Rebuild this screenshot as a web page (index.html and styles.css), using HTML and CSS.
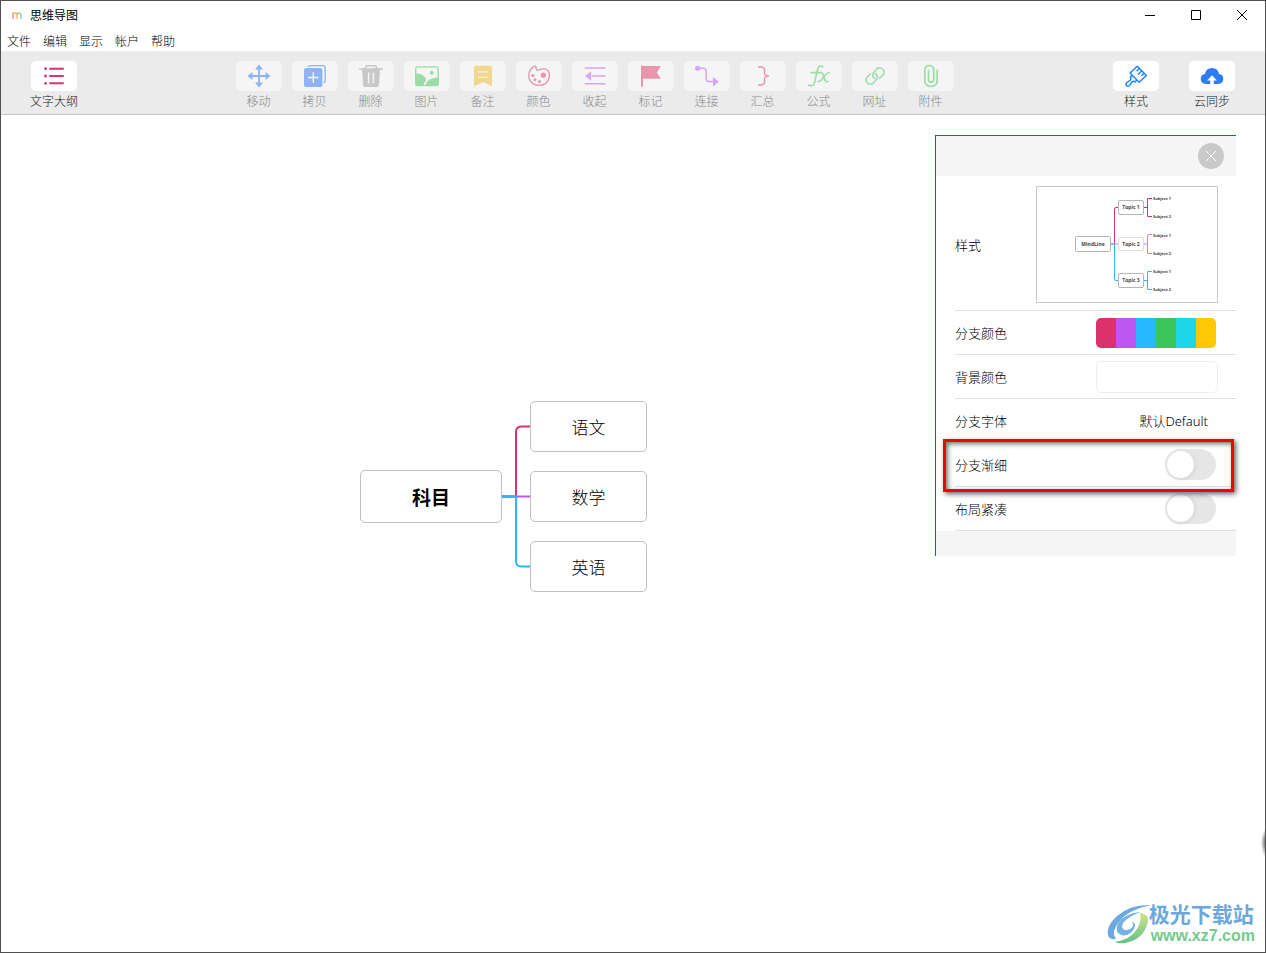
FILE: index.html
```html
<!DOCTYPE html>
<html lang="zh-CN">
<head>
<meta charset="utf-8">
<meta name="viewport" content="width=device-width, initial-scale=1">
<title>思维导图</title>
<link rel="stylesheet" href="styles.css">
</head>
<body>
<div class="window">
  <header class="titlebar">
    <svg class="app-icon" viewBox="0 0 10 10" aria-hidden="true" fill="none" stroke-width="1.3">
      <path d="M1 8V1.5" stroke="#e8837a"/>
      <path d="M1 3.5Q1 2 3 2Q5 2 5 4V8" stroke="#f0b95a"/>
      <path d="M5 4Q5 2 7 2Q9 2 9 4" stroke="#9bd08a"/>
      <path d="M9 4V8" stroke="#6cc5ee"/>
    </svg>
    <h1 class="title">思维导图</h1>
    <div class="window-controls">
      <button class="window-button" type="button" aria-label="最小化"><svg viewBox="0 0 12 12"><path d="M1 5.5H11"/></svg></button>
      <button class="window-button" type="button" aria-label="最大化"><svg viewBox="0 0 12 12"><path d="M1.5 0.5H10.5V9.5H1.5Z"/></svg></button>
      <button class="window-button" type="button" aria-label="关闭"><svg viewBox="0 0 12 12"><path d="M1 0L11 10M11 0L1 10"/></svg></button>
    </div>
  </header>

  <nav class="menubar" aria-label="菜单">
    <button class="menu" type="button">文件</button>
    <button class="menu" type="button">编辑</button>
    <button class="menu" type="button">显示</button>
    <button class="menu" type="button">帐户</button>
    <button class="menu" type="button">帮助</button>
  </nav>

  <div class="toolbar" role="toolbar">
    <div class="tool-group">
      <button class="tool outline" type="button">
        <span class="tile"><svg class="icon" viewBox="0 0 26 26" fill="none" stroke="currentColor" stroke-width="2" stroke-linecap="round"><path d="M9 5.7H22M9 13H22M9 20.3H22"/><path d="M4.6 5.7h.01M4.6 13h.01M4.6 20.3h.01" stroke-width="2.8"/></svg></span>
        <span class="tool-label">文字大纲</span>
      </button>
    </div>

    <div class="tool-group main-tools">
      <button class="tool blue" type="button" disabled>
        <span class="tile"><svg class="icon" viewBox="0 0 26 26" fill="currentColor"><path d="M13 4V22M4 13H22" stroke="currentColor" stroke-width="1.8"/><path d="M13 1.6L17 6.4H9ZM13 24.4L17 19.6H9ZM1.6 13L6.4 9V17ZM24.4 13L19.6 9V17Z"/></svg></span>
        <span class="tool-label">移动</span>
      </button>
      <button class="tool blue" type="button" disabled>
        <span class="tile"><svg class="icon" viewBox="0 0 26 26"><path d="M6 4.2Q6.4 2.7 8.5 2.7H20.5Q23.2 2.7 23.2 5.4V17.5Q23.2 19.4 21.6 20.2" fill="none" stroke="currentColor" stroke-width="1.3"/><rect x="2" y="5" width="18.4" height="19" rx="2.6" fill="currentColor"/><path d="M11.3 9.2V19.8M6 14.5H16.6" stroke="#f5f5f5" stroke-width="1.4"/></svg></span>
        <span class="tool-label">拷贝</span>
      </button>
      <button class="tool gray" type="button" disabled>
        <span class="tile"><svg class="icon" viewBox="0 0 26 26"><path d="M1.2 6H24.8M7 5.6L8.3 2.8H17.7L19 5.6" fill="none" stroke="currentColor" stroke-width="1.6" stroke-linejoin="round"/><path d="M4 6H22L21 21.8Q20.8 24 18.6 24H7.4Q5.2 24 5 21.8Z" fill="currentColor"/><path d="M10.6 9.5V20.5M15.4 9.5V20.5" stroke="#f5f5f5" stroke-width="1.5"/></svg></span>
        <span class="tool-label">删除</span>
      </button>
      <button class="tool green" type="button" disabled>
        <span class="tile"><svg class="icon" viewBox="0 0 26 26"><rect x="1.7" y="3.9" width="22.6" height="18.6" rx="2" fill="none" stroke="currentColor" stroke-width="1.4"/><path d="M2 10.5Q10.5 10.3 12.3 17.2Q9.8 19.3 9.6 22.5H3Q2 22.5 2 21.5ZM11.4 22.5Q12.2 15.2 24.3 14.2V21.5Q24.3 22.5 23.3 22.5Z" fill="currentColor"/><circle cx="17.7" cy="9.7" r="2" fill="currentColor"/></svg></span>
        <span class="tool-label">图片</span>
      </button>
      <button class="tool yellow" type="button" disabled>
        <span class="tile"><svg class="icon" viewBox="0 0 26 26"><path d="M4 23.3V4.7Q4 2.7 6 2.7H20Q22 2.7 22 4.7V23.3L13 19.2Z" fill="currentColor"/><path d="M8.2 8.8H17.8M8.2 14.3H17.8" stroke="#f8f2df" stroke-width="1.3" stroke-linecap="round"/></svg></span>
        <span class="tool-label">备注</span>
      </button>
      <button class="tool pink" type="button" disabled>
        <span class="tile"><svg class="icon" viewBox="0 0 26 26"><path d="M6.8 4.4Q10 1.8 10.2 5.2Q9.8 8 13 6.8Q18 4.8 21.3 7Q24.2 9.4 23.2 14.3Q21.5 21.8 13.5 22.4Q5.8 22.5 3.3 16Q1.2 8.8 6.8 4.4Z" fill="none" stroke="currentColor" stroke-width="1.4"/><g fill="currentColor"><circle cx="17.3" cy="12.2" r="2.6"/><circle cx="6.8" cy="12.4" r="1.5"/><circle cx="9" cy="16.8" r="1.5"/><circle cx="13.5" cy="18.5" r="1.5"/></g></svg></span>
        <span class="tool-label">颜色</span>
      </button>
      <button class="tool purple" type="button" disabled>
        <span class="tile"><svg class="icon" viewBox="0 0 26 26"><path d="M3.4 5H22.8M10.8 13H22.8M3.4 20.7H22.8" stroke="currentColor" stroke-width="1.5" stroke-linecap="round"/><path d="M3 13L9.2 8.2V17.8Z" fill="currentColor"/></svg></span>
        <span class="tool-label">收起</span>
      </button>
      <button class="tool pink" type="button" disabled>
        <span class="tile"><svg class="icon" viewBox="0 0 26 26"><path d="M4 3.2V23" stroke="currentColor" stroke-width="2" stroke-linecap="round"/><path d="M4 3H22.8L18.9 9.4L22.8 15.8H4Z" fill="currentColor"/></svg></span>
        <span class="tool-label">标记</span>
      </button>
      <button class="tool purple" type="button" disabled>
        <span class="tile"><svg class="icon" viewBox="0 0 26 26"><path d="M4 5.3H9.2Q12.2 5.3 12.2 8.3V15.4Q12.2 18.6 15.2 18.6H19.5" fill="none" stroke="currentColor" stroke-width="1.5"/><circle cx="3.7" cy="5.3" r="2.6" fill="currentColor"/><path d="M19 14L24.8 18.8L19 23.6Z" fill="currentColor"/></svg></span>
        <span class="tool-label">连接</span>
      </button>
      <button class="tool pink" type="button" disabled>
        <span class="tile"><svg class="icon" viewBox="0 0 26 26"><path d="M8 4.1H11.3Q14.5 4.1 14.5 7V10Q14.5 12.7 18.8 12.9Q14.5 13.1 14.5 15.8V19Q14.5 21.9 11.3 21.9H8" fill="none" stroke="currentColor" stroke-width="1.5"/></svg></span>
        <span class="tool-label">汇总</span>
      </button>
      <button class="tool green" type="button" disabled>
        <span class="tile"><svg class="icon" viewBox="0 0 26 26"><path d="M17 3.8Q12.8 1.2 11.5 6.8L8.6 19.2Q7.4 24 2.8 22.2M5 9.6H15.4M14.2 9.8Q16.2 9.2 17 11.4L19 17.2Q19.8 19.6 22.2 18.4M23.4 9.8Q21.2 9.6 19.2 12L15.8 16.4Q14 18.8 12 18.4" fill="none" stroke="currentColor" stroke-width="1.6" stroke-linecap="round"/></svg></span>
        <span class="tool-label">公式</span>
      </button>
      <button class="tool green" type="button" disabled>
        <span class="tile"><svg class="icon" viewBox="0 0 26 26"><path d="M12.6 15.6A4.6 4.6 0 0 1 11.6 9.6L15.4 5.2A4.6 4.6 0 0 1 21.6 11.2L17.4 15.2M13.4 10.4A4.6 4.6 0 0 1 14.4 16.4L10.6 20.8A4.6 4.6 0 0 1 4.4 14.8L8.6 10.8" fill="none" stroke="currentColor" stroke-width="1.5" stroke-linecap="round"/></svg></span>
        <span class="tool-label">网址</span>
      </button>
      <button class="tool green" type="button" disabled>
        <span class="tile"><svg class="icon" viewBox="0 0 26 26"><path d="M19.2 7V17.2Q19.2 23.3 13 23.3Q6.8 23.3 6.8 17.2V7.2Q6.8 2.5 11.2 2.5Q15.7 2.5 15.7 7.2V16.5Q15.7 19.2 13.1 19.2Q10.5 19.2 10.5 16.5V7.5" fill="none" stroke="currentColor" stroke-width="1.7" stroke-linecap="round"/></svg></span>
        <span class="tool-label">附件</span>
      </button>
    </div>

    <div class="tool-group side-tools">
      <button class="tool style" type="button">
        <span class="tile"><svg class="icon" viewBox="0 0 26 26"><path d="M14.3 3.2L23.4 12.4L16.2 19.3L7 10.1ZM9.2 12.3L7.4 14.2Q8.6 16.4 6.8 17.6L3.7 19.8Q2.2 21.6 3.6 22.8Q5 24.2 6.6 22.4L9 19Q10.2 17.6 12 19L13.9 17M16.4 5.4L14 7.8M18.8 7.8L15.3 11.2M21.2 10.2L18.8 12.6" fill="none" stroke="currentColor" stroke-width="1.4" stroke-linejoin="round" stroke-linecap="round"/></svg></span>
        <span class="tool-label">样式</span>
      </button>
      <button class="tool cloud" type="button">
        <span class="tile"><svg class="icon" viewBox="0 0 26 26"><path d="M7 21Q1.7 20.6 1.7 15.8Q1.8 11.8 5.9 11Q7 5 13 5Q18.9 5 20.1 11Q24.3 11.8 24.3 15.8Q24.3 20.6 19 21Z" fill="currentColor"/><path d="M13 12.2L17.8 17.4H14.8V21H11.2V17.4H8.2Z" fill="#fff"/></svg></span>
        <span class="tool-label">云同步</span>
      </button>
    </div>
  </div>

  <main class="canvas">
    <section class="mindmap" aria-label="科目">
      <div class="node root">科目</div>
      <svg class="links" viewBox="0 0 28 191" fill="none" stroke-width="2" aria-hidden="true">
        <path d="M0 95.5H14V31Q14 25.5 19.5 25.5H28" stroke="#dc316b"/>
        <path d="M0 95.5H28" stroke="#be57f2"/>
        <path d="M0 95.5H14V160Q14 165.5 19.5 165.5H28" stroke="#26b9ff"/>
      </svg>
      <div class="branches">
        <div class="node">语文</div>
        <div class="node">数学</div>
        <div class="node">英语</div>
      </div>
    </section>

    <aside class="panel" aria-label="样式">
      <div class="panel-header">
        <button class="panel-close" type="button" aria-label="关闭"><svg viewBox="0 0 12 12"><path d="M1 1L11 11M11 1L1 11"/></svg></button>
      </div>
      <div class="row preview-row">
        <span>样式</span>
        <button class="preview" type="button" aria-label="样式预览">
          <svg viewBox="0 0 180 115" fill="none">
            <g stroke="#dc316b"><path d="M77.5 57V22Q77.5 20.5 79 20.5H81M106 20.5H110.5M115 11.5H110.5V29.5H115"/></g>
            <g stroke="#c77df5"><path d="M74 57H81M106 57H110.5M115 47.5H112Q110.5 47.5 110.5 49V66.5H115"/></g>
            <g stroke="#26b9ff"><path d="M74 57H77.5V92Q77.5 93.5 79 93.5H81M106 93.5H110.5M115 84.5H110.5V102.5H115"/></g>
            <g stroke="#b5b5b5"><rect x="38.5" y="49.5" width="35" height="15" rx="1.5"/><rect x="81.5" y="13.5" width="25" height="14" rx="1.5"/><rect x="81.5" y="50.5" width="25" height="13" rx="1.5" stroke="#dddddd"/><rect x="81.5" y="86.5" width="25" height="14" rx="1.5"/></g>
            <g class="mini-topic"><text x="56" y="59">MindLine</text><text x="94" y="22">Topic 1</text><text x="94" y="59">Topic 2</text><text x="94" y="95">Topic 3</text></g>
            <g class="mini-subject"><text x="116" y="13">Subject 1</text><text x="116" y="31">Subject 2</text><text x="116" y="50">Subject 1</text><text x="116" y="68">Subject 2</text><text x="116" y="86">Subject 1</text><text x="116" y="104">Subject 2</text></g>
          </svg>
        </button>
      </div>
      <div class="row">
        <span>分支颜色</span>
        <div class="field"><button class="palette" type="button" aria-label="分支颜色"><i class="c1"></i><i class="c2"></i><i class="c3"></i><i class="c4"></i><i class="c5"></i><i class="c6"></i></button></div>
      </div>
      <div class="row">
        <span>背景颜色</span>
        <div class="field"><button class="background-color" type="button" aria-label="背景颜色"></button></div>
      </div>
      <div class="row">
        <span>分支字体</span>
        <button class="font-value" type="button">默认Default</button>
      </div>
      <div class="row highlighted">
        <label for="taper">分支渐细</label>
        <input class="switch" id="taper" type="checkbox" role="switch">
      </div>
      <div class="row">
        <label for="compact">布局紧凑</label>
        <input class="switch" id="compact" type="checkbox" role="switch">
      </div>
      <div class="panel-footer"></div>
    </aside>

    <div class="edge-shadow"></div>

    <div class="watermark">
      <svg class="watermark-logo" viewBox="0 0 46 40" aria-hidden="true">
        <defs>
          <linearGradient id="leaf" x1="0" y1="0" x2="0" y2="1"><stop offset="0" stop-color="#d3e386"/><stop offset="1" stop-color="#5fc283"/></linearGradient>
        </defs>
        <path d="M44 1Q24 0 10 12Q-1 22 1 31Q2 36 9 35Q4 29 11 19Q20 6 44 1Z" fill="#6ca9df"/>
        <path d="M34 8Q18 9 11 19Q7 28 14 31Q22 33 27 25Q30 19 25 18Q28 22 23 25Q17 28 15 23Q15 15 34 8Z" fill="#76b2e2"/>
        <path d="M33 9Q44 10 40 21Q35 36 18 39Q12 40 8 38Q23 36 30 25Q35 17 33 9Z" fill="url(#leaf)"/>
      </svg>
      <div class="watermark-text"><span class="watermark-name">极光下载站</span><span class="watermark-url">www.xz7.com</span></div>
    </div>
  </main>
</div>
</body>
</html>
```
FILE: styles.css
```css
* {
  box-sizing: border-box;
}

body {
  margin: 0;
  font-family: "Noto Sans", "Noto Sans CJK SC", sans-serif;
  font-size: 12px;
  font-weight: 300;
  color: #000;
}

button {
  padding: 0;
  border: 0;
  background: none;
  color: inherit;
  font: inherit;
}

svg {
  display: block;
}

.window {
  display: flex;
  flex-direction: column;
  min-height: 100vh;
  border: 1px solid #505050;
  background: #fff;
}

/* Title bar and menus */
.titlebar {
  display: flex;
  align-items: center;
  height: 30px;
  padding-left: 11px;
}

.app-icon {
  width: 10px;
  height: 10px;
}

.title {
  margin: 0 auto 0 8px;
  font-size: 12px;
  font-weight: 400;
  line-height: 20px;
}

.window-controls {
  display: flex;
}

.window-button {
  display: grid;
  place-items: center;
  width: 46px;
  height: 30px;
}

.window-button svg {
  width: 12px;
  height: 12px;
  fill: none;
  stroke: #000;
}

.menubar {
  display: flex;
  gap: 12px;
  height: 20px;
  padding-left: 6px;
}

.menu {
  line-height: 22px;
}

/* Toolbar */
.toolbar {
  display: flex;
  justify-content: space-between;
  height: 64px;
  padding: 10px 30px 0 29px;
  border-bottom: 1px solid #c6c6c6;
  background: #ebebeb;
}

.tool-group {
  display: flex;
}

.main-tools {
  gap: 10px;
  padding-right: 2px;
}

.side-tools {
  gap: 30px;
}

.tool {
  display: flex;
  flex-direction: column;
  align-items: center;
  min-width: 46px;
}

.tile {
  display: grid;
  place-items: center;
  width: 46px;
  height: 30px;
  border-radius: 5px;
  background: #fff;
}

.tool:disabled .tile {
  background: #f5f5f5;
}

.icon {
  width: 26px;
  height: 26px;
}

.tool-label {
  line-height: 22px;
  color: #222;
}

.tool:disabled .tool-label {
  color: #888;
}

.outline { color: #e0316d; }
.blue { color: #8fb4f5; }
.gray { color: #c8c8c8; }
.green { color: #9cdca6; }
.yellow { color: #f2d88f; }
.pink { color: #e896ae; }
.purple { color: #d7a5f4; }
.style { color: #1684fc; }
.cloud { color: #2f7bf6; }

/* Mind map */
.canvas {
  position: relative;
  flex: 1;
  min-height: 480px;
  overflow: hidden;
}

.mindmap {
  position: absolute;
  top: 286px;
  left: 359px;
  display: flex;
  align-items: center;
}

.node {
  display: grid;
  place-items: center;
  width: 117px;
  height: 51px;
  border: 1px solid #c0c0c0;
  border-radius: 5px;
  background: #fff;
  font-size: 17px;
}

.root {
  width: 142px;
  height: 53px;
  font-size: 19px;
  font-weight: 700;
}

.links {
  width: 28px;
  height: 191px;
}

.branches {
  display: grid;
  gap: 19px;
}

/* Style panel */
.panel {
  position: absolute;
  top: 20px;
  right: 29px;
  width: 301px;
  border-top: 1px solid #0f62b8;
  border-left: 1px solid #0f62b8;
  background: #fff;
  font-size: 13px;
}

.panel-header {
  display: flex;
  align-items: center;
  justify-content: flex-end;
  height: 40px;
  padding-right: 12px;
  background: #f5f5f5;
}

.panel-close {
  display: grid;
  place-items: center;
  width: 26px;
  height: 26px;
  border-radius: 50%;
  background: #c9c9c9;
}

.panel-close svg {
  width: 12px;
  height: 12px;
  stroke: #fff;
}

.row {
  position: relative;
  display: flex;
  align-items: center;
  justify-content: space-between;
  height: 44px;
  margin-left: 19px;
  padding-right: 18px;
  border-bottom: 1px solid #e0e0e0;
}

.preview-row {
  height: 135px;
  padding-top: 2px;
}

.preview {
  width: 182px;
  border: 1px solid #c8c8c8;
  background: #fff;
}

.mini-topic,
.mini-subject {
  fill: #444;
  font-family: "Open Sans", sans-serif;
  font-weight: 700;
}

.mini-topic {
  font-size: 5px;
  text-anchor: middle;
}

.mini-subject {
  font-size: 4px;
}

.field {
  width: 122px;
}

.palette {
  display: flex;
  width: 120px;
  height: 30px;
  border-radius: 5px;
  overflow: hidden;
}

.palette i {
  flex: 1;
  height: 30px;
}

.c1 { background: #dc316b; }
.c2 { background: #be57f2; }
.c3 { background: #26b9ff; }
.c4 { background: #3ac55d; }
.c5 { background: #1cd7e8; }
.c6 { background: #ffc800; }

.background-color {
  display: block;
  width: 122px;
  height: 32px;
  border: 1px solid #eee;
  border-radius: 5px;
  background: #fff;
}

.font-value {
  margin-right: 10px;
}

.switch {
  appearance: none;
  width: 51px;
  height: 31px;
  margin: 0 2px 0 0;
  padding: 2px;
  border-radius: 16px;
  background: #e6e6e6;
}

.switch::before {
  content: "";
  display: block;
  width: 27px;
  height: 27px;
  border-radius: 50%;
  background: #fff;
  box-shadow: 1px 1px 4px #d2d2d2;
}

.switch:checked {
  background: #3ac55d;
}

.switch:checked::before {
  margin-left: 20px;
}

.highlighted::after {
  content: "";
  position: absolute;
  z-index: 1;
  top: -4px;
  right: 2px;
  bottom: -6px;
  left: -12px;
  border: 3px solid #f80000;
  box-shadow: 2px 2px 5px #666, inset 2px 2px 5px #777;
  pointer-events: none;
}

.panel-footer {
  height: 25px;
  background: #f5f5f5;
}

.edge-shadow {
  position: absolute;
  right: -8px;
  bottom: 94px;
  width: 12px;
  height: 30px;
  background: radial-gradient(closest-side, #333, transparent);
}

/* Watermark */
.watermark {
  position: absolute;
  right: 10px;
  bottom: 6px;
  display: flex;
  align-items: center;
}

.watermark-logo {
  width: 46px;
  height: 40px;
  margin-right: -4px;
}

.watermark-text {
  display: grid;
}

.watermark-name {
  font-size: 21px;
  font-weight: 700;
  line-height: 24px;
  color: #6ca8dc;
}

.watermark-url {
  padding-left: 2px;
  font-family: "Liberation Sans", Arial, sans-serif;
  font-size: 16px;
  font-weight: 700;
  line-height: 20px;
  color: #74ca8c;
}
```
